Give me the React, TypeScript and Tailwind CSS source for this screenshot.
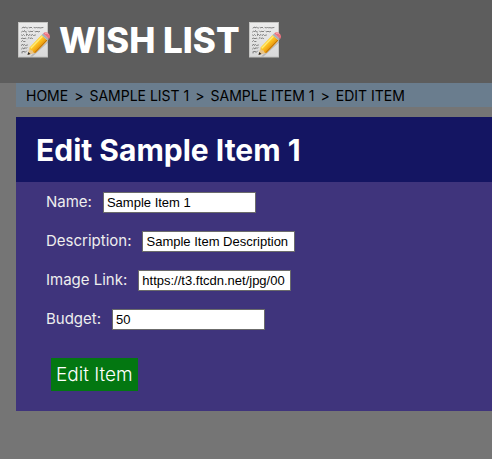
import React from "react";

function MemoIcon() {
  return (
    <svg className="h-9 w-8 shrink-0" viewBox="0 0 32 36" aria-hidden="true">
      <defs>
        <linearGradient id="paper" x1="0" y1="0" x2="0" y2="1">
          <stop offset="0" stopColor="#ececec" />
          <stop offset="1" stopColor="#d9d9d9" />
        </linearGradient>
        <linearGradient id="pencil" x1="0.3" y1="0.3" x2="0.7" y2="0.7">
          <stop offset="0" stopColor="#ffdb3c" />
          <stop offset="0.5" stopColor="#fbb91b" />
          <stop offset="1" stopColor="#d98208" />
        </linearGradient>
      </defs>
      <rect x="0.5" y="0.5" width="29" height="34.5" fill="url(#paper)" stroke="#c4c4c2" />
      <g fill="none" stroke="#6a6a6a" strokeWidth="0.8" strokeLinecap="round">
        <path d="M4 6l1.500-1 .5 1 1.500-1 1 1h1M11 5.500l1 .5 1-1 1 1M16 5.500l1.500.5 1-1 1 1 1.500-.5 1 .5 3-.5" />
        <path d="M3.500 10l1-1 1 1 1-1.500 1 1.500h1M10.500 9l1 1 1.500-1 1 1 1-1M17 9.500l1 .5 1-1 1 1 1.500-.5" />
        <path d="M3.500 13l1 .5 1-1 1 1M8.500 12v1.500l1-1 1 1 1.500-1 1 1 1.500-1 1 1 2-.5" />
        <path d="M3.500 16.500l1.500-.5 1 1 1-1 1 .5M10 16.500l1-1 1 1 1.500-.5 1 .5M3.500 19.500l1-1 1 1h1.500" />
        <path d="M3.500 23.500l1-1.500 1 1.500 1-1 1 1 2-.5M3.500 27l1-1 1.500 1 1-1.500 1 1 1-1M4 31v-1.500l1 .5 1-1 1 1.500 1.500-1.500" />
      </g>
      <path d="M12 34.500L30 19l.5 1-16 14.500z" fill="#6f6f6f" opacity="0.35" />
      <path d="M9.500 33L11.500 25.500L17.500 31Z" fill="#e8c58b" />
      <path d="M9.500 33l.8-3 2.200 2z" fill="#292929" />
      <path d="M11.500 25.500L23.500 13L29.500 18.500L17.500 31L15.500 30.500L14.500 28.500L12.500 28Z" fill="url(#pencil)" />
      <path d="M12.800 26.200L24.500 14.200" stroke="#ffeb76" strokeWidth="1.400" />
      <path d="M16.800 30.500L29 18" stroke="#bd7408" strokeWidth="1" />
      <path d="M23.500 13l1.600-1.600 6 5.600-1.600 1.500z" fill="#a8b1b5" />
      <path d="M25.100 11.400c1.500-1.700 4-1.400 5.500 0 1.500 1.400 2 3.900.5 5.600z" fill="#e9737e" />
      <path d="M27 11.400c1.300-.6 2.600 0 3.400 1" fill="none" stroke="#ffb0b5" strokeWidth="1" />
    </svg>
  );
}

const crumbs = ["HOME", "SAMPLE LIST 1", "SAMPLE ITEM 1"];

const fields = [
  { id: "name", label: "Name:", value: "Sample Item 1" },
  { id: "description", label: "Description:", value: "Sample Item Description" },
  { id: "image", label: "Image Link:", value: "https://t3.ftcdn.net/jpg/00" },
  { id: "budget", label: "Budget:", value: "50" },
];

export default function App() {
  return (
    <div className="min-h-screen bg-[#757575] font-['Inter',sans-serif]">
      <header className="bg-[#5d5d5d] px-[18px] pt-4 pb-[19px]">
        <h1 className="flex items-center gap-[9px] text-[35px] leading-[48px] font-extrabold text-white">
          <MemoIcon />
          <span>WISH LIST</span>
          <MemoIcon />
        </h1>
      </header>

      <main className="pl-4">
        <nav
          aria-label="Breadcrumb"
          className="flex flex-wrap gap-x-1.5 bg-[#6a7d8e] px-2.5 pt-px text-sm leading-[23px] text-black"
        >
          {crumbs.map((crumb) => (
            <React.Fragment key={crumb}>
              <a href="#">{crumb}</a>
              <span>&gt;</span>
            </React.Fragment>
          ))}
          <span aria-current="page">EDIT ITEM</span>
        </nav>

        <section className="mt-2.5 bg-[#3f347c]">
          <h2 className="bg-[#141562] px-5 pt-[13px] pb-3 text-3xl leading-10 font-bold text-white">
            Edit Sample Item 1
          </h2>
          <form className="px-[30px] pt-2.5 pb-5" onSubmit={(e) => e.preventDefault()}>
            <div className="flex flex-col gap-[18px]">
              {fields.map((field) => (
                <div key={field.id} className="flex items-start gap-[11px]">
                  <label htmlFor={field.id} className="text-[15px] leading-5 text-[#eeeeee]">
                    {field.label}
                  </label>
                  <input
                    id={field.id}
                    type="text"
                    defaultValue={field.value}
                    className="h-[21px] w-[153px] border border-[#6b6b6b] bg-white px-[3px] font-['Liberation_Sans',sans-serif] text-[13px] text-black"
                  />
                </div>
              ))}
            </div>
            <button type="submit" className="mt-7 ml-[5px] block bg-[#037711] px-[5px] pt-px text-[19px] leading-8 font-light text-white">
              Edit Item
            </button>
          </form>
        </section>
      </main>
    </div>
  );
}
